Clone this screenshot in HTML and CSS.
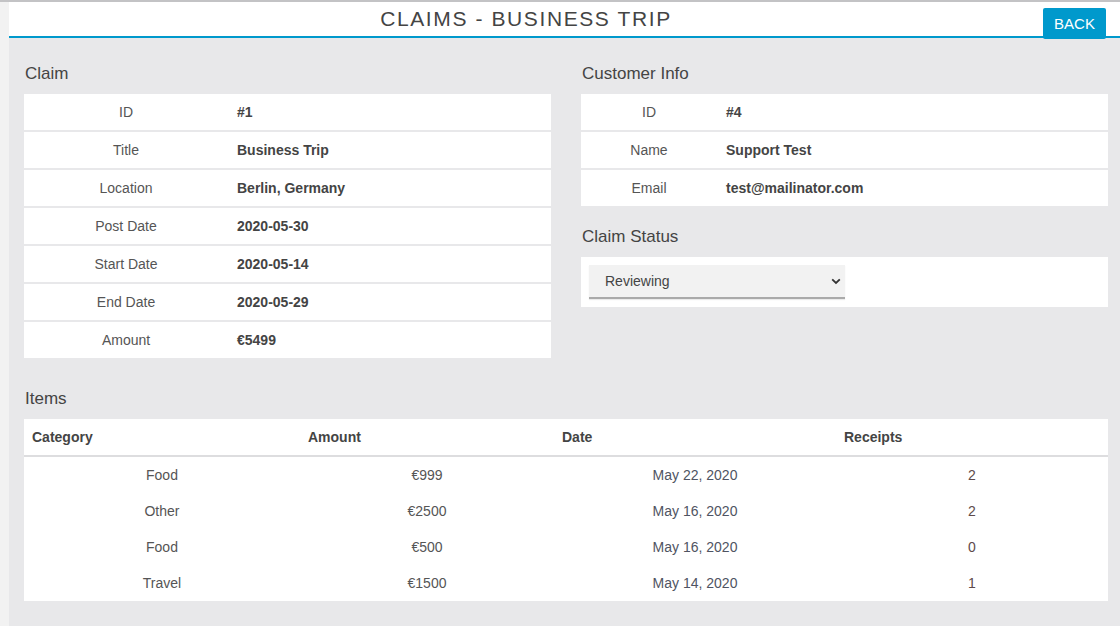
FILE: index.html
```html
<!DOCTYPE html>
<html lang="en">
<head>
<meta charset="utf-8">
<title>Claims - Business Trip</title>
<link rel="stylesheet" href="styles.css">
</head>
<body>
<div class="page">
  <header class="topbar">
    <h1 class="title">CLAIMS - BUSINESS TRIP</h1>
    <button class="back-btn" type="button">BACK</button>
  </header>
  <main class="main">
    <div class="columns">
      <div class="col">
        <section class="section">
          <h2 class="section-title">Claim</h2>
          <div class="info-card info-card--wide">
            <div class="info-row"><div class="info-label">ID</div><div class="info-value">#1</div></div>
            <div class="info-row"><div class="info-label">Title</div><div class="info-value">Business Trip</div></div>
            <div class="info-row"><div class="info-label">Location</div><div class="info-value">Berlin, Germany</div></div>
            <div class="info-row"><div class="info-label">Post Date</div><div class="info-value">2020-05-30</div></div>
            <div class="info-row"><div class="info-label">Start Date</div><div class="info-value">2020-05-14</div></div>
            <div class="info-row"><div class="info-label">End Date</div><div class="info-value">2020-05-29</div></div>
            <div class="info-row"><div class="info-label">Amount</div><div class="info-value">€5499</div></div>
          </div>
        </section>
      </div>
      <div class="col">
        <section class="section">
          <h2 class="section-title">Customer Info</h2>
          <div class="info-card info-card--narrow">
            <div class="info-row"><div class="info-label">ID</div><div class="info-value">#4</div></div>
            <div class="info-row"><div class="info-label">Name</div><div class="info-value">Support Test</div></div>
            <div class="info-row"><div class="info-label">Email</div><div class="info-value">test@mailinator.com</div></div>
          </div>
        </section>
        <section class="section section--spaced">
          <h2 class="section-title">Claim Status</h2>
          <div class="status-card">
            <div class="select-wrap">
              <select class="status-select">
                <option selected>Reviewing</option>
                <option>Approved</option>
                <option>Rejected</option>
              </select>
              <svg class="chevron" width="10" height="7" viewBox="0 0 10 7" aria-hidden="true"><path d="M1.2 1.3 L5 5 L8.8 1.3" fill="none" stroke="#333" stroke-width="1.8"/></svg>
            </div>
          </div>
        </section>
      </div>
    </div>
    <section class="section section--items">
      <h2 class="section-title">Items</h2>
      <table class="items">
        <colgroup>
          <col class="c1"><col class="c2"><col class="c3"><col class="c4">
        </colgroup>
        <thead>
          <tr><th>Category</th><th>Amount</th><th>Date</th><th>Receipts</th></tr>
        </thead>
        <tbody>
          <tr><td>Food</td><td>€999</td><td class="date">May 22, 2020</td><td class="num">2</td></tr>
          <tr><td>Other</td><td>€2500</td><td class="date">May 16, 2020</td><td class="num">2</td></tr>
          <tr><td>Food</td><td>€500</td><td class="date">May 16, 2020</td><td class="num">0</td></tr>
          <tr><td>Travel</td><td>€1500</td><td class="date">May 14, 2020</td><td class="num">1</td></tr>
        </tbody>
      </table>
    </section>
  </main>
</div>
</body>
</html>
```

FILE: styles.css
```css
html, body {
  margin: 0;
  padding: 0;
}
body {
  background: #f2f2f2;
  border-top: 2px solid #c3c3c5;
  font-family: "Liberation Sans", Arial, sans-serif;
  color: #444;
  min-height: 624px;
}
.page {
  margin-left: 9px;
  background: #e8e8ea;
  min-height: 624px;
}
.topbar {
  height: 34px;
  background: #fff;
  border-bottom: 2px solid #0099cc;
  display: flex;
  align-items: flex-start;
}
.title {
  flex: 1;
  margin: 0;
  font-size: 21px;
  font-weight: normal;
  letter-spacing: 1.6px;
  color: #444;
  line-height: 34px;
  text-align: center;
}
.back-btn {
  flex: none;
  margin: 6px 14px 0 0;
  width: 63px;
  height: 31px;
  background: #0099cc;
  color: #fff;
  border: none;
  border-radius: 2px;
  font-family: "Liberation Sans", Arial, sans-serif;
  font-size: 15px;
  padding: 0;
  position: relative;
  z-index: 2;
}
.main {
  padding: 24px 12px 24px 15px;
}
.columns {
  display: grid;
  grid-template-columns: 1fr 1fr;
  column-gap: 30px;
}
.section-title {
  margin: 0 0 8px 1px;
  font-size: 17px;
  font-weight: normal;
  line-height: 24px;
  color: #444;
}
.section--spaced {
  margin-top: 19px;
}
.section--items {
  margin-top: 29px;
}
.info-card {
  display: flex;
  flex-direction: column;
  gap: 2px;
}
.info-row {
  display: grid;
  height: 36px;
  background: #fff;
  align-items: center;
  font-size: 14px;
}
.info-card--wide .info-row {
  grid-template-columns: 204px 1fr;
}
.info-card--narrow .info-row {
  grid-template-columns: 136px 1fr;
}
.info-label {
  text-align: center;
  color: #555;
}
.info-value {
  padding-left: 9px;
  font-weight: bold;
  color: #444;
}
.status-card {
  background: #fff;
  padding: 8px;
  height: 34px;
}
.select-wrap {
  position: relative;
  width: 256px;
  height: 34px;
}
.status-select {
  appearance: none;
  -webkit-appearance: none;
  width: 256px;
  height: 34px;
  background: #f2f2f2;
  border: none;
  border-bottom: 2px solid #aaa;
  box-shadow: 0 1px 1px rgba(0,0,0,0.08);
  padding: 0 0 0 16px;
  font-family: "Liberation Sans", Arial, sans-serif;
  font-size: 14px;
  color: #444;
  outline: none;
}
.chevron {
  position: absolute;
  right: 4px;
  top: 13px;
  pointer-events: none;
}
.items {
  width: 100%;
  border-collapse: collapse;
  background: #fff;
  table-layout: fixed;
  font-size: 14px;
}
.items .c1 { width: 276px; }
.items .c2 { width: 254px; }
.items .c3 { width: 282px; }
.items th {
  height: 36px;
  padding: 0 8px;
  text-align: left;
  font-weight: bold;
  color: #444;
  border-bottom: 2px solid #dddddf;
}
.items td {
  height: 36px;
  padding: 0;
  text-align: center;
  color: #555;
}
.items td.date {
  color: #4f5462;
}
.items td.num {
  color: #5e4a4a;
}
```
